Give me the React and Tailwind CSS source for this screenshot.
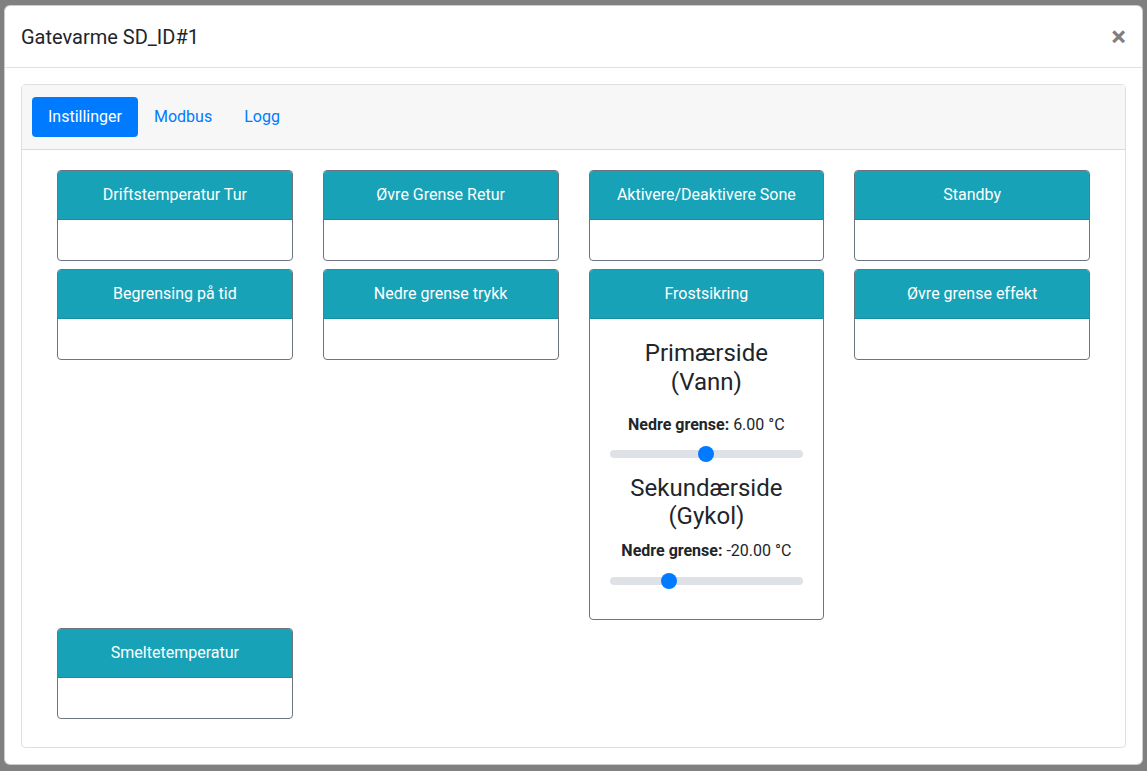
import React from 'react';

const row1 = ['Driftstemperatur Tur', 'Øvre Grense Retur', 'Aktivere/Deaktivere Sone', 'Standby'];

function SettingCard({ title, children }) {
  return (
    <div className="mb-2 rounded border border-[#6c757d] bg-white overflow-hidden">
      <div className="bg-[#17a2b8] border-b border-[#148fa2] py-3 text-center text-white leading-6">{title}</div>
      {children || <div className="h-10" />}
    </div>
  );
}

function Slider({ left }) {
  return (
    <div className="relative h-4 flex items-center">
      <div className="h-2 w-full rounded-full bg-[#dee2e6]" />
      <div className={`absolute top-0 h-4 w-4 rounded-full bg-[#007bff] ${left}`} />
    </div>
  );
}

function Frost() {
  return (
    <div className="p-5 text-center text-[#212529]">
      <h3 className="text-2xl font-normal leading-[28.8px]">Primærside<br />(Vann)</h3>
      <p className="mt-4 leading-6"><b>Nedre grense:</b> 6.00 °C</p>
      <div className="mt-[9px]"><Slider left="left-[88px]" /></div>
      <h3 className="mt-3 text-2xl font-normal leading-[28.8px]">Sekundærside<br />(Gykol)</h3>
      <p className="mt-2 leading-6"><b>Nedre grense:</b> -20.00 °C</p>
      <div className="mt-[10px] mb-[10px]"><Slider left="left-[51px]" /></div>
    </div>
  );
}

export default function App() {
  return (
    <div className="min-h-screen bg-[#808080] px-1 pt-[5px] pb-1" style={{ fontFamily: 'Roboto, "Noto Sans", sans-serif' }}>
      <div className="rounded-md border border-black/20 bg-white">
        {/* Header */}
        <div className="flex items-center justify-between border-b border-[#dee2e6] px-4 pt-4 pb-[15px]">
          <h5 className="text-xl font-normal leading-[30px] text-[#212529]">Gatevarme SD_ID#1</h5>
          <button className="text-[28px] font-bold leading-none text-black/50">×</button>
        </div>

        {/* Body */}
        <div className="p-4">
          <div className="rounded border border-black/[.125]">
            <div className="border-b border-black/[.125] bg-[#f7f7f7] py-3 pl-[10px]">
              <nav className="flex">
                <a className="rounded bg-[#007bff] px-4 py-2 leading-6 text-white">Instillinger</a>
                <a className="px-4 py-2 leading-6 text-[#007bff]">Modbus</a>
                <a className="px-4 py-2 leading-6 text-[#007bff]">Logg</a>
              </nav>
            </div>
            <div className="p-5">
              <div className="flex flex-wrap items-start">
                {row1.map((t) => (
                  <div key={t} className="w-1/4 px-[15px]"><SettingCard title={t} /></div>
                ))}
                <div className="w-1/4 px-[15px]"><SettingCard title="Begrensing på tid" /></div>
                <div className="w-1/4 px-[15px]"><SettingCard title="Nedre grense trykk" /></div>
                <div className="w-1/4 px-[15px]"><SettingCard title="Frostsikring"><Frost /></SettingCard></div>
                <div className="w-1/4 px-[15px]"><SettingCard title="Øvre grense effekt" /></div>
                <div className="w-1/4 px-[15px]"><SettingCard title="Smeltetemperatur" /></div>
              </div>
            </div>
          </div>
        </div>
      </div>
    </div>
  );
}
